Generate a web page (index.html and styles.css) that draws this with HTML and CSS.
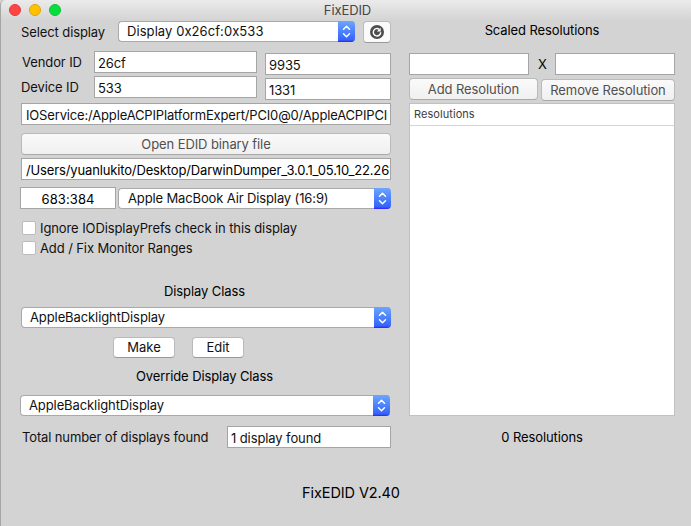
FILE: index.html
```html
<!DOCTYPE html>
<html lang="en">
<head>
<meta charset="utf-8">
<title>FixEDID</title>
<link rel="stylesheet" href="styles.css">
</head>
<body>
<svg width="0" height="0" class="defs"><symbol id="arrows" viewBox="0 0 17 21"><path d="M5.5 8.2 8.5 5.2 11.5 8.2M5.5 12.8 8.5 15.8 11.5 12.8" fill="none" stroke="#fff" stroke-width="1.5" stroke-linecap="round" stroke-linejoin="round"/></symbol></svg>
<div class="window">
  <header class="titlebar">
    <div class="lights"><i class="light close"></i><i class="light minimize"></i><i class="light maximize"></i></div>
    <h1>FixEDID</h1>
  </header>
  <main class="panels">
    <section class="left">
      <div class="row display-row">
        <label>Select display</label>
        <div class="select"><span class="display-name">Display 0x26cf:0x533</span><svg class="stepper"><use href="#arrows"/></svg></div>
        <button class="button reload" aria-label="Reload"><svg width="14" height="14" viewBox="0 0 14 14"><circle cx="7" cy="7" r="7" fill="#4c4c4c"/><path d="M9.2 4.3A3.7 3.7 0 1 0 10.7 7.3" fill="none" stroke="#fff" stroke-width="1.4"/><path d="M10.7 2.8v3.8H6.9z" fill="#fff"/></svg></button>
      </div>
      <div class="ids">
        <div class="id-labels"><label>Vendor ID</label><label class="device">Device ID</label></div>
        <div class="id-hex"><div class="field">26cf</div><div class="field">533</div></div>
        <div class="id-dec"><div class="field">9935</div><div class="field">1331</div></div>
      </div>
      <div class="field path"><span>IOService:/AppleACPIPlatformExpert/PCI0@0/AppleACPIPCI</span></div>
      <button class="button disabled open">Open EDID binary file</button>
      <div class="field file"><span>/Users/yuanlukito/Desktop/DarwinDumper_3.0.1_05.10_22.26</span></div>
      <div class="row ratio-row">
        <div class="field ratio">683:384</div>
        <div class="select"><span class="monitor-name">Apple MacBook Air Display (16:9)</span><svg class="stepper"><use href="#arrows"/></svg></div>
      </div>
      <label class="check first"><i class="box"></i><span>Ignore IODisplayPrefs check in this display</span></label>
      <label class="check"><i class="box"></i><span>Add / Fix Monitor Ranges</span></label>
      <h2 class="class-title">Display Class</h2>
      <div class="select"><span>AppleBacklightDisplay</span><svg class="stepper"><use href="#arrows"/></svg></div>
      <div class="row actions"><button class="button make">Make</button><button class="button edit">Edit</button></div>
      <h2 class="override-title">Override Display Class</h2>
      <div class="select override"><span>AppleBacklightDisplay</span><svg class="stepper"><use href="#arrows"/></svg></div>
      <div class="row total-row"><label>Total number of displays found</label><div class="field">1 display found</div></div>
    </section>
    <section class="right">
      <h2 class="scaled-title">Scaled Resolutions</h2>
      <div class="row size-row"><div class="field"></div><span class="times">X</span><div class="field"></div></div>
      <div class="row resolution-buttons"><button class="button disabled add">Add Resolution</button><button class="button disabled remove">Remove Resolution</button></div>
      <div class="table"><div class="table-head">Resolutions</div></div>
      <p class="count">0 Resolutions</p>
    </section>
  </main>
  <footer>FixEDID V2.40</footer>
</div>
</body>
</html>
```
FILE: styles.css
```css
* { box-sizing: border-box; }
body { margin: 0; font: 13px/16px Inter, "Liberation Sans", sans-serif; letter-spacing: -0.1px; color: #111; background: #d3d3d3; }
.defs { display: block; height: 0; }
.window { height: 526px; overflow: hidden; border-left: 1px solid #a5a5a5; border-top-left-radius: 5px; background: linear-gradient(#ebebeb, #d3d3d3 21px); }
span, label { white-space: nowrap; }
h1, h2, p { margin: 0; font-size: 13px; font-weight: 400; line-height: 16px; text-align: center; color: #000; }
.titlebar { height: 21px; display: grid; grid-template-columns: 62px 1fr 59px; }
.titlebar h1 { padding-top: 2px; color: #464646; }
.lights { display: flex; gap: 8px; padding: 4px 0 0 8px; }
.light { width: 12px; height: 12px; border-radius: 50%; border: 1px solid; }
.close { background: #ff4543; border-color: #e2383a; }
.minimize { background: #ffc100; border-color: #dea408; }
.maximize { background: #04df3d; border-color: #0cc335; }
.panels { display: flex; gap: 18px; padding-left: 20px; }
.left { width: 370px; }
.right { width: 266px; }
.row { display: flex; }
.field { height: 22px; border: 1px solid #a5a5a5; background: #fff; padding: 3px 0 0 3px; line-height: 17px; overflow: hidden; }
.select { height: 21px; display: flex; justify-content: space-between; align-items: center; border-radius: 4px; border: solid #a9a9a9; border-width: 1px 0 1px 1px; padding-left: 8px; background: #fff; }
.select span { margin-top: -1px; }
.stepper { width: 17px; height: 21px; margin: -1px 0; flex: none; border-radius: 0 4px 4px 0; background: linear-gradient(#6ca6ff, #3365fb 90%, #321cff); }
.button { height: 22px; padding: 0; border: 1px solid #bababa; border-bottom-color: #999; border-radius: 4px; background: #fff; color: #111; font: inherit; letter-spacing: inherit; }
.button.disabled { background: linear-gradient(#fafafa, #f0f0f0); color: #505050; border-bottom-color: #aaa; }
.display-row { height: 21px; }
.display-row label { width: 97px; padding-top: 3px; }
.display-row .select { width: 237px; }
.display-name { letter-spacing: 0.07px; }
.reload { width: 28px; margin-left: 8px; display: flex; align-items: center; justify-content: center; background: #fafafa; }
.ids { display: grid; grid-template-columns: 73px 163px 126px; margin-top: 9px; }
.id-labels { display: grid; grid-template-rows: 25px 24px; padding: 3px 0 0 1px; }
.id-labels .device { margin-left: -1px; }
.id-hex, .id-dec { display: grid; gap: 3px; align-content: start; }
.id-dec { margin: 2px -8px 0 8px; }
.path { letter-spacing: -0.16px; padding-left: 4px; }
.open { display: block; width: 100%; margin-top: 8px; }
.file { margin-top: 3px; color: #000; letter-spacing: -0.14px; padding-left: 4px; }
.ratio-row { margin: 7px 0 0 -1px; align-items: end; gap: 2px; }
.ratio { width: 96px; text-align: center; padding-left: 0; color: #000; letter-spacing: 0.1px; }
.ratio-row .select { width: 273px; padding-left: 9px; }
.monitor-name { letter-spacing: -0.13px; }
.check { display: flex; gap: 4px; height: 20px; padding-left: 1px; }
.check.first { margin-top: 12px; }
.check span { margin-top: -1px; }
.box { width: 14px; height: 14px; border: 1px solid #bcbcbc; border-radius: 2px; background: #fff; }
.class-title { margin: 22px 0 8px; padding-right: 3px; }
.actions { margin-top: 9px; padding-left: 92px; gap: 17px; }
.actions .button { height: 21px; line-height: 15px; padding-bottom: 1px; letter-spacing: 0; }
.make { width: 62px; }
.edit { width: 52px; }
.override-title { margin: 10px 0 11px; padding-right: 3px; }
.override { margin: 0 1px 0 -1px; }
.total-row { margin-top: 10px; }
.total-row label { width: 206px; padding: 3px 0 0 1px; letter-spacing: -0.13px; }
.total-row .field { flex: 1; }
.scaled-title { padding-top: 1px; height: 32px; }
.size-row { justify-content: space-between; align-items: center; }
.size-row .field { width: 120px; }
.times { padding-left: 1px; color: #000; }
.resolution-buttons { margin-top: 3px; gap: 3px; }
.add { width: 129px; }
.remove { width: 134px; margin-top: 1px; }
.table { margin-top: 2px; height: 313px; border: 1px solid #c1c1c1; background: #fff; }
.table-head { height: 22px; border-bottom: 1px solid #d5d5d5; padding: 2px 0 0 4px; font-size: 11px; letter-spacing: 0.06px; color: #3d3d3d; }
.count { margin-top: 13px; }
footer { margin: 36px 0 0 10px; font-size: 14.5px; line-height: 18px; text-align: center; color: #000; }
```
